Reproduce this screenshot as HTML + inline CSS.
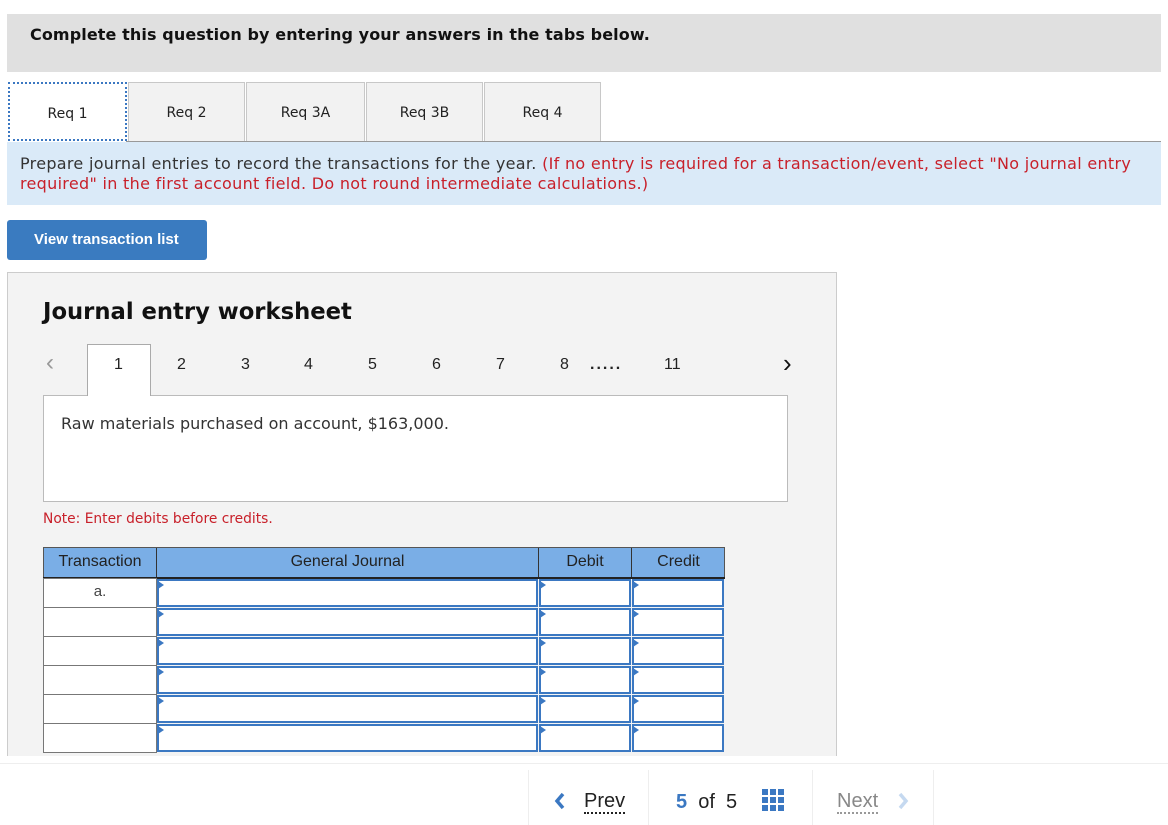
<!DOCTYPE html>
<html><head><style>
*{box-sizing:border-box;margin:0;padding:0}
body{width:1168px;height:825px;background:#fff;position:relative;overflow:hidden;font-family:"DejaVu Sans",Verdana,sans-serif;color:#222}
.a{position:absolute}
.tab{position:absolute;top:82px;height:59px;width:117px;background:#f2f2f2;border:1px solid #c8c8c8;border-bottom:none;font-size:14px;text-align:center;line-height:60px}
.ar{font-family:"Liberation Sans",Arial,sans-serif}
.num{position:absolute;top:356px;font-size:16px;font-family:"Liberation Sans",Arial,sans-serif}
.cell{position:absolute;border:1px solid #777;background:#fff}
.inp{position:absolute;background:#fff;border:2px solid #3b78c2}
.inp:before{content:"";position:absolute;left:-1px;top:0;border-left:6px solid #3b78c2;border-top:4px solid transparent;border-bottom:4px solid transparent}
</style></head><body>
<div class="a" style="left:7px;top:14px;width:1154px;height:58px;background:#e0e0e0"></div>
<div class="a" style="left:30px;top:25px;font-size:16px;font-weight:bold;color:#111;letter-spacing:0.1px">Complete this question by entering your answers in the tabs below.</div>

<div class="tab" style="left:8px;width:119px;background:#fff;border:2px dotted #3b78c2;border-bottom:2px dotted #3b78c2">Req 1</div>
<div class="tab" style="left:128px">Req 2</div>
<div class="tab" style="left:246px;width:119px">Req 3A</div>
<div class="tab" style="left:366px">Req 3B</div>
<div class="tab" style="left:484px">Req 4</div>
<div class="a" style="left:126px;top:141px;width:1035px;height:1px;background:#999"></div>

<div class="a" style="left:7px;top:142px;width:1154px;height:63px;background:#daeaf8"></div>
<div class="a" style="left:20px;top:154px;width:1130px;font-size:16px;line-height:20px;color:#333;letter-spacing:0.3px">Prepare journal entries to record the transactions for the year. <span style="color:#c8202a">(If no entry is required for a transaction/event, select "No journal entry required" in the first account field. Do not round intermediate calculations.)</span></div>

<div class="a ar" style="left:7px;top:220px;width:200px;height:40px;background:#3a7bc0;border-radius:3px;color:#fff;font-weight:bold;font-size:15px;line-height:40px;padding-left:27px">View transaction list</div>

<div class="a" style="left:7px;top:272px;width:830px;height:484px;background:#f3f3f3;border:1px solid #ccc;border-bottom:none"></div>
<div class="a" style="left:43px;top:299px;font-size:22.7px;font-weight:bold;color:#111">Journal entry worksheet</div>

<div class="a" style="left:87px;top:344px;width:64px;height:52px;background:#fff;border:1px solid #aaa;border-bottom:none;z-index:2"></div>
<div class="num" style="left:46px;top:349px;font-size:24px;color:#999">&lsaquo;</div>
<div class="num" style="left:114px;z-index:3">1</div>
<div class="num" style="left:177px">2</div>
<div class="num" style="left:241px">3</div>
<div class="num" style="left:304px">4</div>
<div class="num" style="left:368px">5</div>
<div class="num" style="left:432px">6</div>
<div class="num" style="left:496px">7</div>
<div class="num" style="left:560px">8</div>
<div class="num" style="left:590px;font-weight:bold;letter-spacing:2px">.....</div>
<div class="num" style="left:664px">11</div>
<div class="num" style="left:783px;top:348px;font-size:26px;color:#111">&rsaquo;</div>

<div class="a" style="left:43px;top:395px;width:745px;height:107px;background:#fff;border:1px solid #bbb"></div>
<div class="a" style="left:61px;top:414px;font-size:16px;color:#333">Raw materials purchased on account, $163,000.</div>
<div class="a" style="left:43px;top:511px;font-size:13.8px;color:#c8202a">Note: Enter debits before credits.</div>

<div class="a ar" style="left:43px;top:547px;width:682px;height:31px;background:#7aaee6;border:1px solid #555;font-size:16px;color:#222">
<div class="a" style="left:0;width:113px;text-align:center;line-height:28px;border-right:1px solid #333;height:29px">Transaction</div>
<div class="a" style="left:113px;width:382px;text-align:center;line-height:28px;border-right:1px solid #333;height:29px">General Journal</div>
<div class="a" style="left:495px;width:93px;text-align:center;line-height:28px;border-right:1px solid #333;height:29px">Debit</div>
<div class="a" style="left:588px;width:93px;text-align:center;line-height:28px">Credit</div>
</div>
<div class="a" style="left:43px;top:577px;width:682px;height:2px;background:#222"></div>

<div id="rows"></div>
<script>
var h='';for(var i=0;i<6;i++){var t=578+i*29;
h+='<div class="cell" style="left:43px;top:'+t+'px;width:114px;height:30px;font-family:Liberation Sans,Arial;font-size:15px;text-align:center;line-height:26px;color:#444">'+(i==0?'a.':'')+'</div>';
h+='<div class="inp" style="left:157px;top:'+(t+1)+'px;width:381px;height:28px"></div>';
h+='<div class="inp" style="left:539px;top:'+(t+1)+'px;width:92px;height:28px"></div>';
h+='<div class="inp" style="left:632px;top:'+(t+1)+'px;width:92px;height:28px"></div>';}
document.getElementById('rows').innerHTML=h;
</script>

<div class="a" style="left:0;top:763px;width:1168px;height:1px;background:#eee"></div>
<div class="a" style="left:528px;top:770px;width:1px;height:55px;background:#eee"></div>
<div class="a" style="left:648px;top:770px;width:1px;height:55px;background:#eee"></div>
<div class="a" style="left:812px;top:770px;width:1px;height:55px;background:#eee"></div>
<div class="a" style="left:933px;top:770px;width:1px;height:55px;background:#eee"></div>
<svg class="a" style="left:553px;top:792px" width="14" height="18"><path d="M10 2 L4 9 L10 16" stroke="#3b78c2" stroke-width="3.5" fill="none"/></svg>
<div class="a ar" style="left:584px;top:791px;font-size:20px;color:#222;border-bottom:2px dotted #222;line-height:21px">Prev</div>
<div class="a ar" style="left:676px;top:791px;font-size:20px;color:#222"><b style="color:#3b78c2">5</b>&nbsp; of&nbsp; 5</div>
<svg class="a" style="left:762px;top:789px" width="22" height="22"><g fill="#3b78c2"><rect x="0" y="0" width="6" height="6"/><rect x="8" y="0" width="6" height="6"/><rect x="16" y="0" width="6" height="6"/><rect x="0" y="8" width="6" height="6"/><rect x="8" y="8" width="6" height="6"/><rect x="16" y="8" width="6" height="6"/><rect x="0" y="16" width="6" height="6"/><rect x="8" y="16" width="6" height="6"/><rect x="16" y="16" width="6" height="6"/></g></svg>
<div class="a ar" style="left:837px;top:791px;font-size:20px;color:#888;border-bottom:2px dotted #999;line-height:21px">Next</div>
<svg class="a" style="left:896px;top:792px" width="14" height="18"><path d="M4 2 L10 9 L4 16" stroke="#c5d9f0" stroke-width="3.5" fill="none"/></svg>
</body></html>
